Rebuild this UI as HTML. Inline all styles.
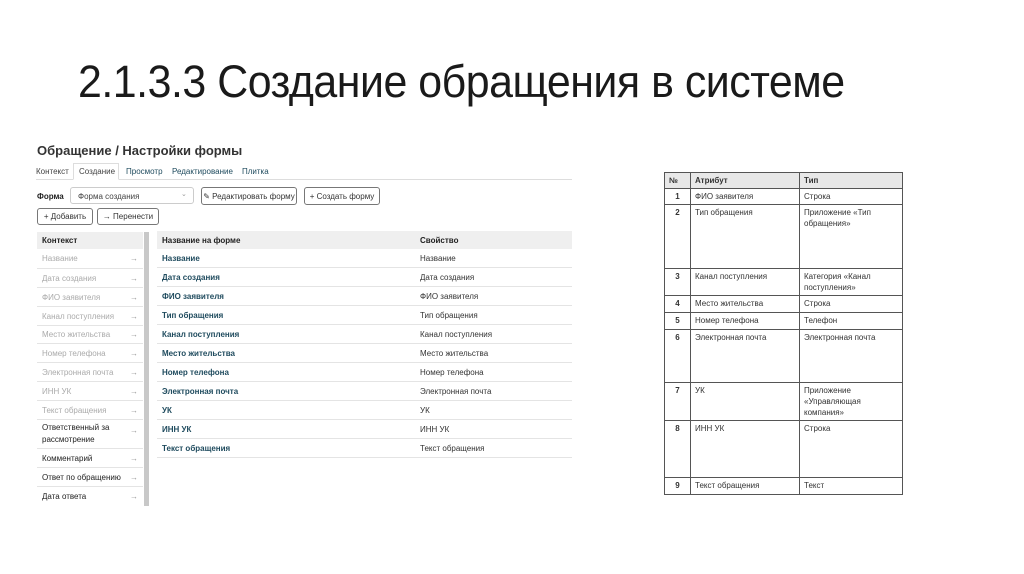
<!DOCTYPE html>
<html><head><meta charset="utf-8"><style>
*{margin:0;padding:0;box-sizing:border-box}
body{width:1024px;height:574px;background:#fff;position:relative;overflow:hidden;font-family:"Liberation Sans","DejaVu Sans",sans-serif;color:#222}
.a{position:absolute;white-space:nowrap}
h1{position:absolute;left:78px;top:56px;font-weight:normal;font-size:45px;color:#1a1a1a;transform-origin:0 0;transform:scaleX(0.953);white-space:nowrap;letter-spacing:-0.5px}
.s{font-size:8px}
.btn{position:absolute;border:1px solid #777;border-radius:3px;font-size:8px;color:#333;display:flex;align-items:center;justify-content:center}
.lr{position:absolute;left:37px;width:106px;border-bottom:1px solid #e4e4e4;font-size:8px;padding-left:5px;display:flex;align-items:center}
.lr span{position:absolute;right:5px;color:#999}
.rr{position:absolute;left:157px;width:415px;height:19px;border-bottom:1px solid #e4e4e4;font-size:8px;display:flex;align-items:center}
.rr b{position:absolute;left:5px;color:#1f4b5e;font-weight:bold}
.rr i{position:absolute;left:263px;font-style:normal;color:#333}
table{position:absolute;left:664px;top:172px;border-collapse:collapse;font-size:8px;width:239px}
td{border:1px solid #555;vertical-align:top;padding:2px 4px;line-height:11px;color:#333}
td:first-child{font-weight:bold;text-align:center;width:26px}
tr.h td{background:#e8e8e8;font-weight:bold;text-align:left}
</style></head><body>
<h1>2.1.3.3 Создание обращения в системе</h1>

<div class="a" style="left:37px;top:143px;font-size:13px;font-weight:bold;color:#333">Обращение / Настройки формы</div>
<div class="a" style="left:36px;top:167px;width:536px;height:13px;border-bottom:1px solid #ddd"></div>
<div class="a" style="left:73px;top:163px;width:46px;height:17px;border:1px solid #ddd;border-bottom:1px solid #fff;background:#fff"></div>
<div class="a s" style="left:36px;top:167px;color:#444">Контекст</div>
<div class="a s" style="left:79px;top:167px;color:#444">Создание</div>
<div class="a s" style="left:126px;top:167px;color:#1f4b5e">Просмотр</div>
<div class="a s" style="left:172px;top:167px;color:#1f4b5e">Редактирование</div>
<div class="a s" style="left:242px;top:167px;color:#1f4b5e">Плитка</div>

<div class="a s" style="left:37px;top:192px;font-weight:bold">Форма</div>
<div class="a" style="left:70px;top:187px;width:124px;height:17px;border:1px solid #ccc;border-radius:3px"></div>
<div class="a s" style="left:78px;top:192px;color:#444">Форма создания</div>
<div class="a" style="left:181px;top:190px;font-size:7px;color:#999">⌄</div>
<div class="btn" style="left:201px;top:187px;width:96px;height:18px">✎ Редактировать форму</div>
<div class="btn" style="left:304px;top:187px;width:76px;height:18px">+ Создать форму</div>
<div class="btn" style="left:37px;top:208px;width:56px;height:17px">+ Добавить</div>
<div class="btn" style="left:97px;top:208px;width:62px;height:17px">→ Перенести</div>

<div class="a" style="left:37px;top:232px;width:106px;height:17px;background:#efefef"></div>
<div class="a s" style="left:42px;top:236px;font-weight:bold">Контекст</div>
<div class="a" style="left:144px;top:232px;width:5px;height:274px;background:#c8c8c8"></div>
<div class="a" style="left:157px;top:231px;width:415px;height:18px;background:#efefef"></div>
<div class="a s" style="left:162px;top:236px;font-weight:bold">Название на форме</div>
<div class="a s" style="left:420px;top:236px;font-weight:bold">Свойство</div>

<div class="lr" style="top:249px;height:20px;color:#aaa">Название<span>→</span></div>
<div class="lr" style="top:269px;height:19px;color:#aaa">Дата создания<span>→</span></div>
<div class="lr" style="top:288px;height:19px;color:#aaa">ФИО заявителя<span>→</span></div>
<div class="lr" style="top:307px;height:19px;color:#aaa">Канал поступления<span>→</span></div>
<div class="lr" style="top:326px;height:18px;color:#aaa">Место жительства<span>→</span></div>
<div class="lr" style="top:344px;height:19px;color:#aaa">Номер телефона<span>→</span></div>
<div class="lr" style="top:363px;height:19px;color:#aaa">Электронная почта<span>→</span></div>
<div class="lr" style="top:382px;height:19px;color:#aaa">ИНН УК<span>→</span></div>
<div class="lr" style="top:401px;height:19px;color:#aaa">Текст обращения<span>→</span></div>
<div class="lr" style="top:420px;height:29px;color:#222;line-height:12px;white-space:normal">Ответственный за<br>рассмотрение<span style="top:5px">→</span></div>
<div class="lr" style="top:449px;height:19px;color:#222">Комментарий<span>→</span></div>
<div class="lr" style="top:468px;height:19px;color:#222">Ответ по обращению<span>→</span></div>
<div class="lr" style="top:487px;height:19px;color:#222;border-bottom:none">Дата ответа<span>→</span></div>

<div class="rr" style="top:249px"><b>Название</b><i>Название</i></div>
<div class="rr" style="top:268px"><b>Дата создания</b><i>Дата создания</i></div>
<div class="rr" style="top:287px"><b>ФИО заявителя</b><i>ФИО заявителя</i></div>
<div class="rr" style="top:306px"><b>Тип обращения</b><i>Тип обращения</i></div>
<div class="rr" style="top:325px"><b>Канал поступления</b><i>Канал поступления</i></div>
<div class="rr" style="top:344px"><b>Место жительства</b><i>Место жительства</i></div>
<div class="rr" style="top:363px"><b>Номер телефона</b><i>Номер телефона</i></div>
<div class="rr" style="top:382px"><b>Электронная почта</b><i>Электронная почта</i></div>
<div class="rr" style="top:401px"><b>УК</b><i>УК</i></div>
<div class="rr" style="top:420px"><b>ИНН УК</b><i>ИНН УК</i></div>
<div class="rr" style="top:439px"><b>Текст обращения</b><i>Текст обращения</i></div>

<table>
<tr class="h" style="height:16px"><td style="text-align:left">№</td><td style="width:109px">Атрибут</td><td>Тип</td></tr>
<tr style="height:16px"><td>1</td><td>ФИО заявителя</td><td>Строка</td></tr>
<tr style="height:64px"><td>2</td><td>Тип обращения</td><td>Приложение «Тип обращения»</td></tr>
<tr style="height:26px"><td>3</td><td>Канал поступления</td><td>Категория «Канал поступления»</td></tr>
<tr style="height:17px"><td>4</td><td>Место жительства</td><td>Строка</td></tr>
<tr style="height:17px"><td>5</td><td>Номер телефона</td><td>Телефон</td></tr>
<tr style="height:53px"><td>6</td><td>Электронная почта</td><td>Электронная почта</td></tr>
<tr style="height:33px"><td>7</td><td>УК</td><td>Приложение «Управляющая компания»</td></tr>
<tr style="height:57px"><td>8</td><td>ИНН УК</td><td>Строка</td></tr>
<tr style="height:17px"><td>9</td><td>Текст обращения</td><td>Текст</td></tr>
</table>
</body></html>
